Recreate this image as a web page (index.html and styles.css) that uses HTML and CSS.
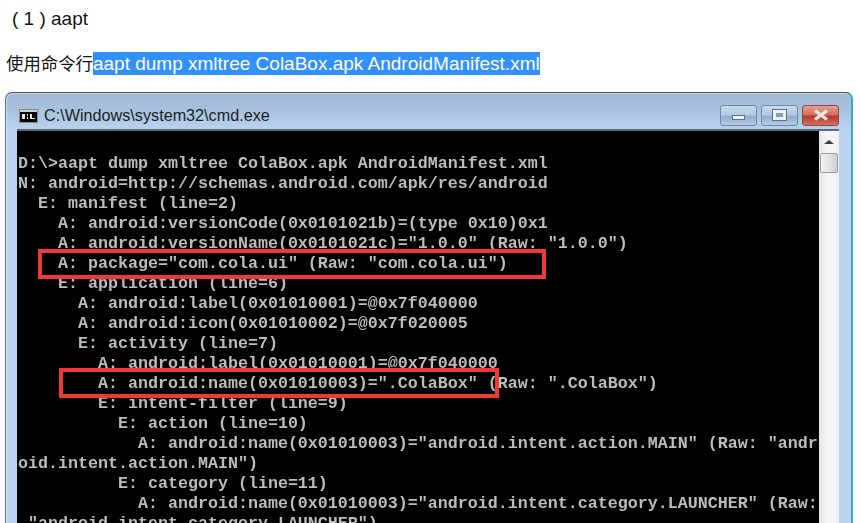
FILE: index.html
```html
<!DOCTYPE html>
<html lang="zh-CN">
<head>
<meta charset="utf-8">
<title>aapt</title>
<link rel="stylesheet" href="styles.css">
</head>
<body>
<p class="para first">( 1 ) aapt</p>
<p class="para second"><span class="cjk">使用命令行</span><span class="selected">aapt dump xmltree ColaBox.apk AndroidManifest.xml</span></p>
<div class="window">
  <div class="titlebar">
    <svg class="app-icon" width="19" height="14" viewBox="0 0 19 14">
      <rect width="19" height="14" fill="#8a8a8a"/>
      <rect x="1" y="1" width="17" height="12" fill="#050505"/>
      <rect x="1" y="1" width="17" height="2" fill="#d0d0d0"/>
      <rect x="3" y="5" width="3" height="5" fill="#e8e8e8"/>
      <rect x="8" y="5" width="1" height="2" fill="#e8e8e8"/>
      <rect x="8" y="8" width="1" height="2" fill="#e8e8e8"/>
      <rect x="11" y="5" width="2" height="5" fill="#e8e8e8"/>
      <rect x="13" y="9" width="3" height="1" fill="#e8e8e8"/>
    </svg>
    <span class="title">C:\Windows\system32\cmd.exe</span>
    <div class="controls">
      <div class="btn"><span class="glyph-min"></span></div>
      <div class="btn"><span class="glyph-max"></span></div>
      <div class="btn close">
        <svg width="16" height="12" viewBox="0 0 16 12"><path d="M2 1.5 L14 10.5 M14 1.5 L2 10.5" stroke="#efe6e2" stroke-width="3.4" fill="none"/></svg>
      </div>
    </div>
  </div>
  <div class="client">
    <div class="console">
<pre class="output">
D:\&gt;aapt dump xmltree ColaBox.apk AndroidManifest.xml
N: android=http://schemas.android.com/apk/res/android
  E: manifest (line=2)
    A: android:versionCode(0x0101021b)=(type 0x10)0x1
    A: android:versionName(0x0101021c)="1.0.0" (Raw: "1.0.0")
    A: package="com.cola.ui" (Raw: "com.cola.ui")
    E: application (line=6)
      A: android:label(0x01010001)=@0x7f040000
      A: android:icon(0x01010002)=@0x7f020005
      E: activity (line=7)
        A: android:label(0x01010001)=@0x7f040000
        A: android:name(0x01010003)=".ColaBox" (Raw: ".ColaBox")
        E: intent-filter (line=9)
          E: action (line=10)
            A: android:name(0x01010003)="android.intent.action.MAIN" (Raw: "andr
oid.intent.action.MAIN")
          E: category (line=11)
            A: android:name(0x01010003)="android.intent.category.LAUNCHER" (Raw:
 "android.intent.category.LAUNCHER")</pre>
      <div class="mark mark-package"></div>
      <div class="mark mark-name"></div>
    </div>
    <div class="scrollbar">
      <div class="arrow"></div>
      <div class="thumb"></div>
    </div>
  </div>
</div>
</body>
</html>
```

FILE: styles.css
```css
html, body {
  margin: 0;
  height: 523px;
  overflow: hidden;
  background: #fff;
}
body {
  font-family: "Liberation Sans", "Noto Sans CJK SC", sans-serif;
  color: #151515;
}
.para {
  margin: 0 0 0 6px;
  font-size: 19px;
  line-height: 24px;
  white-space: nowrap;
}
.first { padding: 7px 0 0 6px; }
.second { margin-top: 21px; }
.cjk { font-size: 17.4px; }
.selected {
  background: #3390ff;
  color: #fff;
  padding: 1px 0;
}
.window {
  margin: 16px 7px 0 5px;
  height: 520px;
  box-sizing: border-box;
  border: 1px solid #6a7075;
  border-top-color: #50555a;
  border-right: 2px solid #3aa6c8;
  border-bottom: 0;
  border-radius: 7px 7px 0 0;
  background: #bcd4ee;
  background-image: linear-gradient(#a0bad6 0, #a9c3df 18px, #bad3ee 38px);
  box-shadow: inset 1px 1px 0 rgba(255, 255, 255, 0.45);
  padding: 0 12px 0 11px;
}
.titlebar {
  display: flex;
  align-items: center;
  height: 36px;
}
.app-icon { flex: none; margin-left: 2px; margin-top: 10px; }
.title {
  margin-left: 6px;
  margin-top: 8px;
  font-size: 16.2px;
  color: #1a1f26;
}
.controls {
  display: flex;
  gap: 4px;
  margin-left: auto;
  margin-top: 8px;
}
.btn {
  width: 37px;
  height: 21px;
  box-sizing: border-box;
  border: 1px solid #6f88a5;
  border-radius: 3px;
  background: linear-gradient(#c6d8ec 0, #b4cbe4 45%, #8fadcd 55%, #b5cde6 100%);
  display: flex;
  align-items: center;
  justify-content: center;
}
.glyph-min {
  width: 13px;
  height: 5px;
  margin-top: 5px;
  background: #f0f1f2;
  border: 1px solid #5d6f85;
  box-sizing: border-box;
}
.glyph-max {
  width: 13px;
  height: 10px;
  background: #8aa0b8;
  border: 3px solid #eef1f4;
  outline: 1px solid #5d6f85;
  box-sizing: border-box;
}
.close {
  border-color: #8c4a4a;
  background: linear-gradient(#e3a193 0, #d2705f 45%, #b8392b 55%, #d2705f 100%);
}
.client {
  display: flex;
  height: 480px;
  border-top: 2px solid #5a6a7a;
  box-sizing: border-box;
}
.console {
  position: relative;
  width: 802px;
  flex: none;
  background: #000;
  padding: 23px 0 0 1px;
  box-sizing: border-box;
  overflow: hidden;
}
.output {
  margin: 0;
  font-family: "Liberation Mono", monospace;
  font-weight: 700;
  font-size: 16.67px;
  line-height: 20px;
  color: #bcbcbc;
  filter: blur(0.4px);
}
.mark {
  position: absolute;
  box-sizing: border-box;
  border: 4px solid #f03838;
}
.mark-package { left: 21px; top: 118px; width: 508px; height: 30px; }
.mark-name { left: 42px; top: 237px; width: 440px; height: 30px; }
.scrollbar {
  width: 20px;
  flex: none;
  background: linear-gradient(90deg, #e6e6e8, #f6f6f7 40%, #f2f2f4);
  display: flex;
  flex-direction: column;
  align-items: center;
}
.arrow {
  width: 0;
  height: 0;
  margin-top: 9px;
  border-left: 5px solid transparent;
  border-right: 5px solid transparent;
  border-bottom: 4px solid #3a3f45;
}
.thumb {
  width: 18px;
  height: 20px;
  margin-top: 9px;
  box-sizing: border-box;
  border: 1px solid #9a9a9a;
  border-radius: 2px;
  background: linear-gradient(90deg, #f2f2f2, #e4e4e4 50%, #cfcfcf);
}
```
